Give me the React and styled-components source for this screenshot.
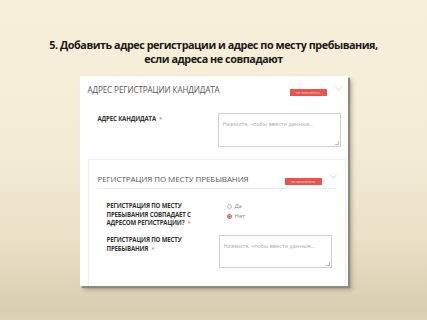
import React from 'react'
import styled, { createGlobalStyle } from 'styled-components'

const Global = createGlobalStyle`
  html, body { margin: 0; padding: 0; }
  body { font-family: "Open Sans", "Liberation Sans", sans-serif; }
`

const Page = styled.div`
  width: 427px;
  height: 320px;
  overflow: hidden;
  background: linear-gradient(180deg, #f8efdb 0%, #f5ecd6 45%, #e9e0c6 75%, #d8ceb0 97%, #ddd4b8 100%);
  display: flex;
  flex-direction: column;
  align-items: center;
`

const Title = styled.h1`
  margin: 38px 0 0;
  font-family: "Open Sans", "Liberation Sans", sans-serif;
  font-weight: 700;
  font-size: 10.8px;
  line-height: 14px;
  color: #1a1a1a;
  text-align: center;
  letter-spacing: -0.45px;
`

const Card = styled.div`
  margin: 10px 0 0 0;
  width: 268px;
  height: 210px;
  background: #fff;
  box-shadow: 2px 2px 1px #8e8a80, 4px 4px 4px rgba(90, 80, 60, 0.35);
  box-sizing: border-box;
  padding: 0 2px 0 8px;
  display: flex;
  flex-direction: column;
`

const Header = styled.div`
  display: flex;
  align-items: center;
  padding: ${p => p.$pt}px 0 ${p => p.$pb}px ${p => p.$pl}px;
  margin: 0 ${p => p.$mr}px 0 ${p => p.$ml}px;
  border-bottom: 1px solid ${p => (p.$line ? '#ebebeb' : 'transparent')};
`

const HeaderText = styled.div`
  flex: 1;
  font-size: ${p => p.$size}px;
  line-height: 13px;
  color: #555;
  text-transform: uppercase;
  letter-spacing: -0.1px;
  white-space: nowrap;
`

const Badge = styled.span`
  background: #e8534f;
  color: #ffd9d6;
  font-size: 3.6px;
  line-height: 7px;
  height: 7px;
  width: ${p => p.$w}px;
  text-align: center;
  margin-top: ${p => p.$mt}px;
  white-space: nowrap;
  text-transform: lowercase;
`

const Chevron = styled.svg`
  width: 7px;
  height: 5px;
  margin-left: 8px;
  margin-top: -3px;
`

const Row = styled.div`
  display: flex;
  align-items: flex-start;
  padding: ${p => p.$pt}px 0 0 ${p => p.$pl}px;
`

const Label = styled.div`
  width: ${p => p.$w}px;
  margin-top: ${p => p.$mt || 0}px;
  font-size: 6.1px;
  font-weight: 700;
  line-height: ${p => p.$lh}px;
  color: #333;
  text-transform: uppercase;
  letter-spacing: -0.15px;
`

const Star = styled.span`
  color: #e8534f;
  margin-left: 3px;
  font-weight: 400;
`

const Field = styled.div`
  width: ${p => p.$w}px;
  height: ${p => p.$h}px;
  border: 1px solid #cfcfcf;
  box-sizing: border-box;
  padding: 6px 4px;
  font-size: 5.6px;
  line-height: 8px;
  color: #aaa;
  position: relative;
`

const Grip = styled.span`
  position: absolute;
  right: 1px;
  bottom: 1px;
  width: 3px;
  height: 3px;
  border-right: 1px solid #bbb;
  border-bottom: 1px solid #bbb;
`

const Panel = styled.div`
  margin-top: 12px;
  border: 1px solid #efefef;
  border-bottom: none;
  box-shadow: 0 -1px 3px rgba(0, 0, 0, 0.04);
  flex: 1;
  display: flex;
  flex-direction: column;
`

const Radios = styled.div`
  display: flex;
  flex-direction: column;
  margin-top: -1px;
`

const Radio = styled.div`
  display: flex;
  align-items: center;
  gap: 3px;
  font-size: 6px;
  line-height: 10px;
  color: #888;
`

const Dot = styled.span`
  width: 5px;
  height: 5px;
  border-radius: 50%;
  border: 1px solid ${p => (p.$on ? '#c0504d' : '#bbb')};
  box-sizing: border-box;
  background: ${p => (p.$on ? 'radial-gradient(circle, #c0504d 45%, #fff 50%)' : '#fff')};
`

const Arrow = () => (
  <Chevron viewBox="0 0 7 5">
    <path d="M0.5 1 L3.5 4 L6.5 1" fill="none" stroke="#c4c4c4" strokeWidth="0.8" />
  </Chevron>
)

export default function App() {
  return (
    <Page>
      <Global />
      <Title>
        5. Добавить адрес регистрации и адрес по месту пребывания,
        <br />
        если адреса не совпадают
      </Title>
      <Card>
        <Header $pt={7} $pb={6} $pl={0} $ml={0} $mr={4}>
          <HeaderText $size={8.1}>Адрес регистрации кандидата</HeaderText>
          <Badge $w={37} $mt={6}>не заполнено</Badge>
          <Arrow />
        </Header>
        <Row $pt={10} $pl={10}>
          <Label $w={120} $lh={10} $mt={1}>Адрес кандидата<Star>*</Star></Label>
          <Field $w={123} $h={34}>Нажмите, чтобы ввести данные...<Grip /></Field>
        </Row>
        <Panel>
          <Header $pt={11} $pb={3} $pl={1} $ml={8} $mr={8} $line>
            <HeaderText $size={8}>Регистрация по месту пребывания</HeaderText>
            <Badge $w={37} $mt={7}>не заполнено</Badge>
            <Arrow />
          </Header>
          <Row $pt={13} $pl={18}>
            <Label $w={120} $lh={8.7}>
              Регистрация по месту<br />пребывания совпадает с<br />адресом регистрации?<Star>*</Star>
            </Label>
            <Radios>
              <Radio><Dot />Да</Radio>
              <Radio><Dot $on />Нет</Radio>
            </Radios>
          </Row>
          <Row $pt={7} $pl={18}>
            <Label $w={112} $lh={9.3}>
              Регистрация по месту<br />пребывания<Star>*</Star>
            </Label>
            <Field $w={113} $h={33}>Нажмите, чтобы ввести данные...<Grip /></Field>
          </Row>
        </Panel>
      </Card>
    </Page>
  )
}
